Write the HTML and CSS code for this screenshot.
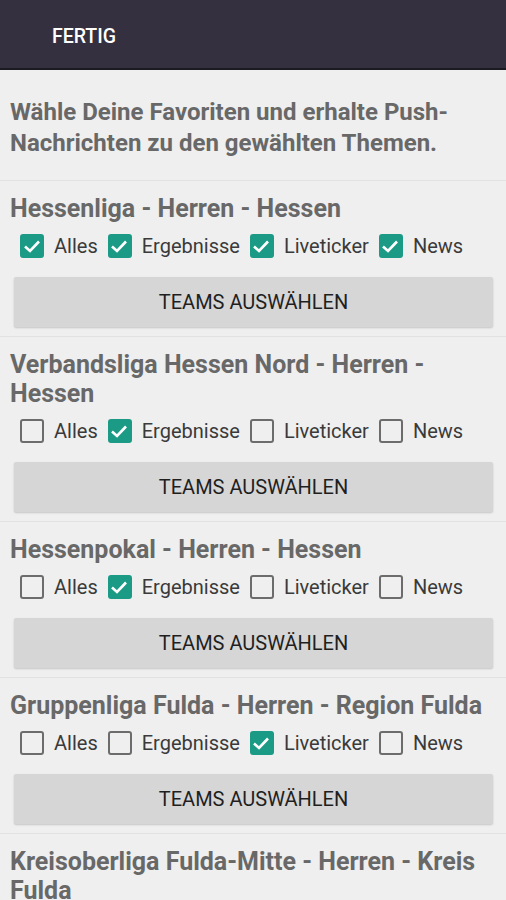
FILE: index.html
```html
<!DOCTYPE html>
<html lang="de">
<head>
    <meta charset="UTF-8">
    <meta name="viewport" content="width=device-width, initial-scale=1.0">
    <title>Favoriten</title>
    <link rel="stylesheet" href="styles.css">
</head>
<body>
    <div class="topbar">
        <span class="done">FERTIG</span>
    </div>
    <p class="intro">Wähle Deine Favoriten und erhalte Push-Nachrichten zu den gewählten Themen.</p>

    <div class="league">
        <h2>Hessenliga - Herren - Hessen</h2>
        <div class="options">
            <label class="opt"><span class="cb on"><svg viewBox="0 0 24 24"><polyline points="5,12.5 10,17 19,7.5"/></svg></span>Alles</label>
            <label class="opt"><span class="cb on"><svg viewBox="0 0 24 24"><polyline points="5,12.5 10,17 19,7.5"/></svg></span>Ergebnisse</label>
            <label class="opt"><span class="cb on"><svg viewBox="0 0 24 24"><polyline points="5,12.5 10,17 19,7.5"/></svg></span>Liveticker</label>
            <label class="opt"><span class="cb on"><svg viewBox="0 0 24 24"><polyline points="5,12.5 10,17 19,7.5"/></svg></span>News</label>
        </div>
        <button class="teams-btn">TEAMS AUSWÄHLEN</button>
    </div>

    <div class="league">
        <h2>Verbandsliga Hessen Nord - Herren - Hessen</h2>
        <div class="options">
            <label class="opt"><span class="cb"></span>Alles</label>
            <label class="opt"><span class="cb on"><svg viewBox="0 0 24 24"><polyline points="5,12.5 10,17 19,7.5"/></svg></span>Ergebnisse</label>
            <label class="opt"><span class="cb"></span>Liveticker</label>
            <label class="opt"><span class="cb"></span>News</label>
        </div>
        <button class="teams-btn">TEAMS AUSWÄHLEN</button>
    </div>

    <div class="league">
        <h2>Hessenpokal - Herren - Hessen</h2>
        <div class="options">
            <label class="opt"><span class="cb"></span>Alles</label>
            <label class="opt"><span class="cb on"><svg viewBox="0 0 24 24"><polyline points="5,12.5 10,17 19,7.5"/></svg></span>Ergebnisse</label>
            <label class="opt"><span class="cb"></span>Liveticker</label>
            <label class="opt"><span class="cb"></span>News</label>
        </div>
        <button class="teams-btn">TEAMS AUSWÄHLEN</button>
    </div>

    <div class="league">
        <h2>Gruppenliga Fulda - Herren - Region Fulda</h2>
        <div class="options">
            <label class="opt"><span class="cb"></span>Alles</label>
            <label class="opt"><span class="cb"></span>Ergebnisse</label>
            <label class="opt"><span class="cb on"><svg viewBox="0 0 24 24"><polyline points="5,12.5 10,17 19,7.5"/></svg></span>Liveticker</label>
            <label class="opt"><span class="cb"></span>News</label>
        </div>
        <button class="teams-btn">TEAMS AUSWÄHLEN</button>
    </div>

    <div class="league">
        <h2>Kreisoberliga Fulda-Mitte - Herren - Kreis Fulda</h2>
    </div>
</body>
</html>
```

FILE: styles.css
```css
body {
    font-family: Roboto, "Noto Sans", sans-serif;
    background-color: #efefef;
    margin: 0;
    padding: 0;
    overflow: hidden;
}
.topbar {
    height: 68px;
    background-color: #34303f;
    border-bottom: 2px solid #1b1a21;
    display: flex;
    align-items: center;
    padding-left: 52px;
}
.done {
    color: #ffffff;
    font-size: 19.5px;
    font-weight: 500;
    padding-top: 4px;
}
.intro {
    margin: 0;
    padding: 27px 10px 21px;
    font-size: 24px;
    font-weight: bold;
    line-height: 31px;
    color: #686868;
}
.league {
    border-top: 1px solid #e2e2e2;
    padding: 13px 10px 9px;
}
.league h2 {
    margin: 0;
    font-size: 25px;
    font-weight: bold;
    line-height: 29px;
    color: #686868;
}
.options {
    display: flex;
    align-items: center;
    height: 32px;
    margin-top: 7px;
    padding-left: 10px;
}
.opt {
    display: flex;
    align-items: center;
    font-size: 20px;
    color: #3a3a3a;
    margin-right: 10px;
}
.cb {
    width: 24px;
    height: 24px;
    box-sizing: border-box;
    border: 2.5px solid #6c6c6c;
    border-radius: 3px;
    margin-right: 10px;
    display: flex;
}
.cb.on {
    background-color: #1b9a86;
    border-color: #1b9a86;
}
.cb svg {
    margin: -2.5px;
    width: 24px;
    height: 24px;
}
.cb polyline {
    fill: none;
    stroke: #ffffff;
    stroke-width: 2.6;
}
.teams-btn {
    display: block;
    width: calc(100% - 7px);
    height: 50px;
    margin: 15px 3px 0 4px;
    background-color: #d6d6d6;
    border: none;
    border-radius: 2px;
    box-shadow: 0 1px 2px rgba(0, 0, 0, 0.18);
    font-family: Roboto, sans-serif;
    font-size: 20px;
    color: #1f1f1f;
    cursor: pointer;
}
```
